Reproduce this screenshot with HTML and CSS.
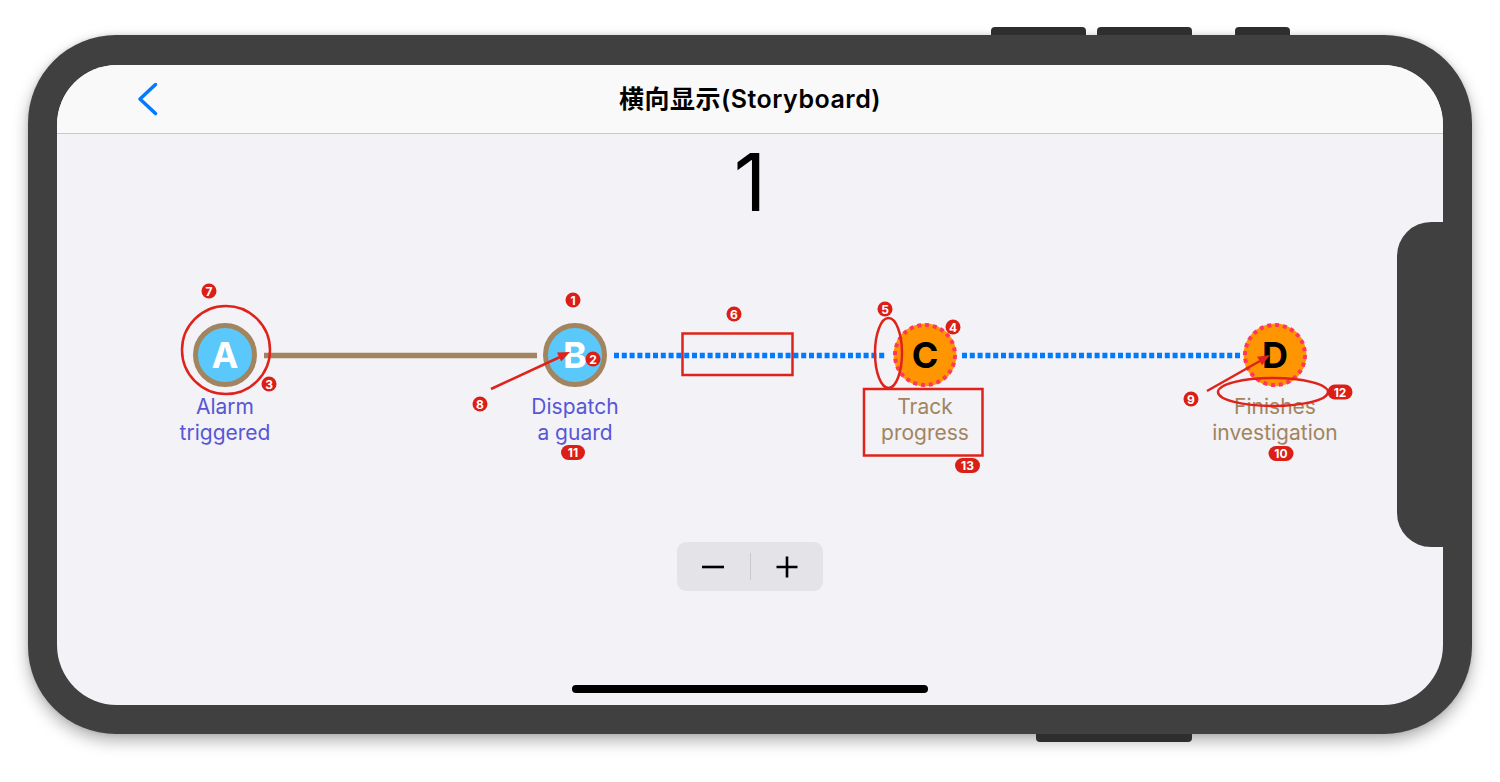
FILE: index.html
```html
<!DOCTYPE html>
<html lang="zh">
<head>
<meta charset="utf-8">
<title>横向显示(Storyboard)</title>
<link rel="stylesheet" href="styles.css">
</head>
<body>
<div class="device">
  <span class="hw hw-top1"></span>
  <span class="hw hw-top2"></span>
  <span class="hw hw-top3"></span>
  <span class="hw hw-bottom"></span>
  <div class="screen">
    <header class="navbar">
      <button class="back" aria-label="Back">
        <svg width="21" height="34" viewBox="0 0 21 34"><path d="M18.5 2.5 L3 17 L18.5 31.5" fill="none" stroke="#007aff" stroke-width="3.5" stroke-linecap="round" stroke-linejoin="round"/></svg>
      </button>
      <h1 class="title">横向显示(Storyboard)</h1>
      <span></span>
    </header>
    <main class="content">
      <div class="count">1</div>
      <div class="timeline">
        <div class="node">
          <div class="bubble bubble-done"><span class="letter letter-light">A</span></div>
          <div class="label label-done">Alarm<br>triggered</div>
        </div>
        <div class="node">
          <div class="bubble bubble-done"><span class="letter letter-light">B</span></div>
          <div class="label label-done">Dispatch<br>a guard</div>
        </div>
        <div class="node">
          <div class="bubble bubble-todo">
            <svg class="ring" viewBox="0 0 64 64"><circle cx="32" cy="32" r="31.5" fill="#ff9500"/><circle cx="32" cy="32" r="30" fill="none" stroke="#ff375f" stroke-width="4" stroke-dasharray="3.93 3.92"/></svg>
            <span class="letter letter-dark">C</span>
          </div>
          <div class="label label-todo">Track<br>progress</div>
        </div>
        <div class="node">
          <div class="bubble bubble-todo">
            <svg class="ring" viewBox="0 0 64 64"><circle cx="32" cy="32" r="31.5" fill="#ff9500"/><circle cx="32" cy="32" r="30" fill="none" stroke="#ff375f" stroke-width="4" stroke-dasharray="3.93 3.92"/></svg>
            <span class="letter letter-dark">D</span>
          </div>
          <div class="label label-todo">Finishes<br>investigation</div>
        </div>
      </div>
      <div class="stepper">
        <button class="step" aria-label="Decrement">
          <svg width="24" height="24" viewBox="0 0 24 24"><path d="M1 12 H23" stroke="#000" stroke-width="2.6"/></svg>
        </button>
        <span class="step-divider"></span>
        <button class="step" aria-label="Increment">
          <svg width="24" height="24" viewBox="0 0 24 24"><path d="M1.5 12 H22.5 M12 1.5 V22.5" stroke="#000" stroke-width="2.6"/></svg>
        </button>
      </div>
      <div class="home-indicator"></div>
    </main>
    <svg class="overlay" width="1386" height="640" viewBox="0 0 1386 640">
      <g transform="translate(-57 -65)">
        <line x1="264" y1="355.5" x2="537" y2="355.5" stroke="#a2845e" stroke-width="5.5"/>
        <line x1="614" y1="355.5" x2="887" y2="355.5" stroke="#007aff" stroke-width="5.5" stroke-dasharray="5 2.8"/>
        <line x1="962" y1="355.5" x2="1241" y2="355.5" stroke="#007aff" stroke-width="5.5" stroke-dasharray="5 2.8"/>
        <g fill="none" stroke="#e0231a" stroke-width="2.5">
          <circle cx="226" cy="350" r="44"/>
          <rect x="682.5" y="333.5" width="110" height="41.5"/>
          <ellipse cx="888.5" cy="353" rx="13.5" ry="35"/>
          <rect x="864" y="389" width="118.5" height="66.5"/>
          <ellipse cx="1273" cy="392" rx="55" ry="14"/>
          <line x1="491" y1="389" x2="560" y2="357"/>
          <line x1="1207" y1="391" x2="1260" y2="361"/>
        </g>
        <g fill="#e0231a">
          <polygon points="570,352 561.2,361.6 557,352.6"/>
          <polygon points="1270,355 1262.1,365.3 1257.1,356.7"/>
        </g>
        <g class="badges">
          <circle cx="573" cy="300" r="7.5"/><text x="573" y="300">1</text>
          <circle cx="593" cy="359" r="7.5"/><text x="593" y="359">2</text>
          <circle cx="269" cy="384" r="7.5"/><text x="269" y="384">3</text>
          <circle cx="953" cy="327" r="7.5"/><text x="953" y="327">4</text>
          <circle cx="885" cy="309" r="7.5"/><text x="885" y="309">5</text>
          <circle cx="734" cy="314" r="7.5"/><text x="734" y="314">6</text>
          <circle cx="209" cy="291" r="7.5"/><text x="209" y="291">7</text>
          <circle cx="480" cy="404" r="7.5"/><text x="480" y="404">8</text>
          <circle cx="1191" cy="399" r="7.5"/><text x="1191" y="399">9</text>
          <rect x="1268.5" y="446" width="25" height="15" rx="7.5"/><text x="1281" y="453.5">10</text>
          <rect x="561" y="445" width="24" height="15" rx="7.5"/><text x="573" y="452.5">11</text>
          <rect x="1327.5" y="384.5" width="25" height="15" rx="7.5"/><text x="1340" y="392">12</text>
          <rect x="955" y="458" width="25" height="15" rx="7.5"/><text x="967.5" y="465.5">13</text>
        </g>
      </g>
    </svg>
  </div>
  <div class="notch"></div>
</div>
</body>
</html>
```
FILE: styles.css
```css
* { box-sizing: border-box; }

html, body {
  margin: 0;
  padding: 0;
  background: #ffffff;
}

body {
  font-family: "Inter", "Noto Sans CJK SC", sans-serif;
  width: 1500px;
  height: 782px;
  overflow: hidden;
}

.device {
  position: relative;
  width: 1444px;
  height: 699px;
  margin: 35px 0 0 28px;
  padding: 30px 29px 29px 29px;
  background: #404040;
  border-radius: 88px;
  box-shadow: 0 7px 16px rgba(0, 0, 0, 0.3), 0 0 5px rgba(0, 0, 0, 0.12);
}

.hw {
  position: absolute;
  background: #2e2e2e;
  height: 8px;
}

.hw-top1 { top: -8px; left: 963px; width: 95px; border-radius: 4px 4px 0 0; }
.hw-top2 { top: -8px; left: 1069px; width: 95px; border-radius: 4px 4px 0 0; }
.hw-top3 { top: -8px; left: 1207px; width: 55px; border-radius: 4px 4px 0 0; }
.hw-bottom { bottom: -8px; left: 1008px; width: 156px; border-radius: 0 0 4px 4px; }

.screen {
  position: relative;
  width: 1386px;
  height: 640px;
  border-radius: 60px;
  overflow: hidden;
  background: #f2f2f7;
  display: flex;
  flex-direction: column;
}

.navbar {
  height: 69px;
  flex: none;
  background: #f9f9fa;
  border-bottom: 1px solid #c9c9cc;
  display: grid;
  grid-template-columns: 1fr auto 1fr;
  align-items: center;
}

.back {
  justify-self: start;
  margin: 0 0 0 80px;
  padding: 0;
  border: 0;
  background: none;
  display: flex;
}

.title {
  margin: -4px 0 0 0;
  font-size: 25px;
  font-weight: 600;
  color: #000;
  letter-spacing: 0.5px;
}

.content {
  flex: 1;
  display: flex;
  flex-direction: column;
  align-items: center;
}

.count {
  margin-top: 8px;
  font-size: 80px;
  line-height: 80px;
  font-weight: 400;
  color: #000;
}

.timeline {
  width: 1400px;
  flex: none;
  margin-top: 101px;
  display: grid;
  grid-template-columns: repeat(4, 1fr);
}

.node {
  display: flex;
  flex-direction: column;
  align-items: center;
}

.bubble {
  width: 64px;
  height: 64px;
  border-radius: 50%;
  display: grid;
  place-items: center;
}

.bubble-done {
  background: #5ac8fa;
  border: 5px solid #a2845e;
}

.bubble-todo > * {
  grid-area: 1 / 1;
}

.ring {
  width: 64px;
  height: 64px;
  display: block;
}

.letter {
  font-size: 36px;
  font-weight: 700;
  line-height: 1;
}

.letter-light { color: #ffffff; }
.letter-dark { color: #000000; }

.label {
  margin-top: 7px;
  font-size: 21px;
  line-height: 26px;
  text-align: center;
}

.label-done { color: #5856d6; }
.label-todo { color: #a2845e; }

.stepper {
  margin-top: 96px;
  width: 146px;
  height: 49px;
  background: #e3e3e8;
  border-radius: 9px;
  display: flex;
  align-items: center;
}

.step {
  flex: 1;
  height: 100%;
  border: 0;
  padding: 0;
  background: none;
  display: flex;
  align-items: center;
  justify-content: center;
}

.step-divider {
  width: 1px;
  height: 27px;
  background: #c8c8cd;
}

.home-indicator {
  margin-top: auto;
  margin-bottom: 12px;
  width: 356px;
  height: 8px;
  border-radius: 4px;
  background: #000;
}

.overlay {
  position: absolute;
  top: 0;
  left: 0;
  pointer-events: none;
}

.badges circle,
.badges rect {
  fill: #dc1f16;
}

.badges text {
  fill: #ffffff;
  font-family: "Inter", sans-serif;
  font-size: 12px;
  font-weight: 700;
  text-anchor: middle;
  dominant-baseline: central;
}

.notch {
  position: absolute;
  left: 1369px;
  top: 187px;
  width: 75px;
  height: 325px;
  background: #404040;
  border-radius: 34px 0 0 34px;
}

.notch::before,
.notch::after {
  content: "";
  position: absolute;
  left: 64px;
  width: 10px;
  height: 10px;
}

.notch::before {
  top: -10px;
  background: radial-gradient(circle at 0 0, transparent 9.5px, #404040 10.5px);
}

.notch::after {
  bottom: -10px;
  background: radial-gradient(circle at 0 100%, transparent 9.5px, #404040 10.5px);
}
```
